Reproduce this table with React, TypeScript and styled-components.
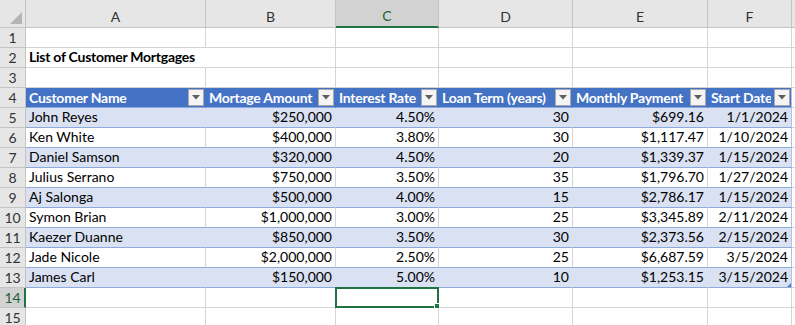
import styled, { createGlobalStyle } from "styled-components";

const GlobalStyle = createGlobalStyle`
  body {
    margin: 0;
    background: #ffffff;
    font-family: Lato, "Liberation Sans", sans-serif;
    overflow: hidden;
  }
`;

const GRID = "#d4d4d4";
const HEAD_BG = "#e6e6e6";
const HEAD_LINE = "#c4c4c4";
const GREEN = "#217346";
const BLUE = "#4472c4";
const BAND = "#d9e1f2";
const BAND_LINE = "#8ea9db";

const Sheet = styled.div`
  display: grid;
  grid-template-columns: 26px 180px 130px 103px 134px 135px 84px 1fr;
  grid-template-rows: 28px;
  grid-auto-rows: 20px;
  width: 795px;
  height: 325px;
  overflow: hidden;
  font-size: 14px;
  color: #000;
`;

const Corner = styled.div`
  position: relative;
  background: ${HEAD_BG};
  border-right: 1px solid ${HEAD_LINE};
  border-bottom: 1px solid ${HEAD_LINE};
  box-sizing: border-box;

  &::after {
    content: "";
    position: absolute;
    right: 3px;
    bottom: 3px;
    border-left: 12px solid transparent;
    border-bottom: 12px solid #b5b5b5;
  }
`;

const ColHead = styled.div<{ $selected?: boolean }>`
  display: flex;
  align-items: flex-end;
  justify-content: center;
  padding-bottom: 1px;
  box-sizing: border-box;
  background: ${(p) => (p.$selected ? "#d2d2d2" : HEAD_BG)};
  border-right: 1px solid ${HEAD_LINE};
  border-bottom: ${(p) => (p.$selected ? `2px solid ${GREEN}` : `1px solid ${HEAD_LINE}`)};
  color: ${(p) => (p.$selected ? "#1f5c3a" : "#333")};
  line-height: 19px;
`;

const RowHead = styled.div<{ $selected?: boolean }>`
  display: flex;
  align-items: flex-end;
  justify-content: center;
  padding-bottom: 1px;
  box-sizing: border-box;
  background: ${(p) => (p.$selected ? "#d2d2d2" : HEAD_BG)};
  border-right: ${(p) => (p.$selected ? `2px solid ${GREEN}` : `1px solid ${HEAD_LINE}`)};
  border-bottom: 1px solid ${HEAD_LINE};
  color: ${(p) => (p.$selected ? "#1f5c3a" : "#333")};
  padding-left: ${(p) => (p.$selected ? "1px" : "0")};
`;

type Kind = "plain" | "head" | "band" | "row";

const cellBg: Record<Kind, string> = {
  plain: "#ffffff",
  head: BLUE,
  band: BAND,
  row: "#ffffff",
};

const Cell = styled.div<{ $kind?: Kind; $right?: boolean; $bold?: boolean; $edge?: boolean }>`
  position: relative;
  z-index: ${(p) => (p.$bold ? 1 : "auto")};
  display: flex;
  align-items: flex-end;
  justify-content: ${(p) => (p.$right ? "flex-end" : "flex-start")};
  padding: 0 3px 1px;
  box-sizing: border-box;
  white-space: nowrap;
  line-height: 18px;
  background: ${(p) => cellBg[p.$kind ?? "plain"]};
  color: ${(p) => (p.$kind === "head" ? "#ffffff" : "#000")};
  font-weight: ${(p) => (p.$bold || p.$kind === "head" ? 700 : 400)};
  letter-spacing: ${(p) => (p.$bold || p.$kind === "head" ? "-0.25px" : "0")};
  border-right: 1px solid
    ${(p) =>
      p.$edge
        ? "#b4c1dc"
        : p.$bold
        ? "transparent"
        : p.$kind === "head"
        ? BLUE
        : p.$kind === "band"
        ? BAND
        : GRID};
  border-bottom: 1px solid
    ${(p) => (p.$kind && p.$kind !== "plain" ? BAND_LINE : GRID)};
`;

const HeadCell = styled(Cell)`
  align-items: center;
  gap: 3px;
  padding-right: 1px;
  padding-bottom: 0;
`;

const HeadLabel = styled.span`
  flex: 1;
  min-width: 0;
  overflow: hidden;
`;

const FilterButton = styled.span`
  display: flex;
  align-items: center;
  justify-content: center;
  width: 16px;
  height: 17px;
  box-sizing: border-box;
  background: #f4f4f4;
  border: 1px solid #a9a9a9;
  flex-shrink: 0;
`;

const Selection = styled.div`
  position: absolute;
  inset: -1px;
  border: 2px solid ${GREEN};
  pointer-events: none;

  &::after {
    content: "";
    position: absolute;
    right: -4px;
    bottom: -4px;
    width: 5px;
    height: 5px;
    background: ${GREEN};
    border: 1px solid #ffffff;
  }
`;

const ResizeGrip = styled.span`
  position: absolute;
  right: 0;
  bottom: 0;
  border-left: 4px solid transparent;
  border-bottom: 4px solid #5b7bc0;
`;

const columns = ["A", "B", "C", "D", "E", "F"];

const headers = [
  "Customer Name",
  "Mortage Amount",
  "Interest Rate",
  "Loan Term (years)",
  "Monthly Payment",
  "Start Date",
];

const rows: string[][] = [
  ["John Reyes", "$250,000", "4.50%", "30", "$699.16", "1/1/2024"],
  ["Ken White", "$400,000", "3.80%", "30", "$1,117.47", "1/10/2024"],
  ["Daniel Samson", "$320,000", "4.50%", "20", "$1,339.37", "1/15/2024"],
  ["Julius Serrano", "$750,000", "3.50%", "35", "$1,796.70", "1/27/2024"],
  ["Aj Salonga", "$500,000", "4.00%", "15", "$2,786.17", "1/15/2024"],
  ["Symon Brian", "$1,000,000", "3.00%", "25", "$3,345.89", "2/11/2024"],
  ["Kaezer Duanne", "$850,000", "3.50%", "30", "$2,373.56", "2/15/2024"],
  ["Jade Nicole", "$2,000,000", "2.50%", "25", "$6,687.59", "3/5/2024"],
  ["James Carl", "$150,000", "5.00%", "10", "$1,253.15", "3/15/2024"],
];

function Caret() {
  return (
    <svg width="8" height="5" viewBox="0 0 8 5">
      <polygon points="0,0 8,0 4,4.5" fill="#5f5f5f" />
    </svg>
  );
}

function EmptyRow({ n, selectedCol }: { n: number; selectedCol?: number }) {
  return (
    <>
      <RowHead $selected={selectedCol !== undefined}>{n}</RowHead>
      {columns.map((c, i) => (
        <Cell key={c}>{selectedCol === i && <Selection />}</Cell>
      ))}
      <Cell />
    </>
  );
}

export default function App() {
  return (
    <>
      <GlobalStyle />
      <Sheet>
        <Corner />
        {columns.map((c) => (
          <ColHead key={c} $selected={c === "C"}>
            {c}
          </ColHead>
        ))}
        <ColHead />

        <EmptyRow n={1} />

        <RowHead>2</RowHead>
        <Cell $bold>List of Customer Mortgages</Cell>
        {columns.slice(1).map((c) => (
          <Cell key={c} />
        ))}
        <Cell />

        <EmptyRow n={3} />

        <RowHead>4</RowHead>
        {headers.map((h, i) => (
          <HeadCell key={h} $kind="head" $edge={i === 5}>
            <HeadLabel>{h}</HeadLabel>
            <FilterButton>
              <Caret />
            </FilterButton>
          </HeadCell>
        ))}
        <Cell />

        {rows.map((r, ri) => {
          const kind: Kind = ri % 2 === 0 ? "band" : "row";
          const last = ri === rows.length - 1;
          return (
            <>
              <RowHead key={`h${ri}`}>{ri + 5}</RowHead>
              {r.map((v, ci) => (
                <Cell key={`${ri}-${ci}`} $kind={kind} $right={ci > 0} $edge={ci === 5}>
                  {v}
                  {last && ci === 5 && <ResizeGrip />}
                </Cell>
              ))}
              <Cell key={`f${ri}`} />
            </>
          );
        })}

        <EmptyRow n={14} selectedCol={2} />
        <EmptyRow n={15} />
      </Sheet>
    </>
  );
}
